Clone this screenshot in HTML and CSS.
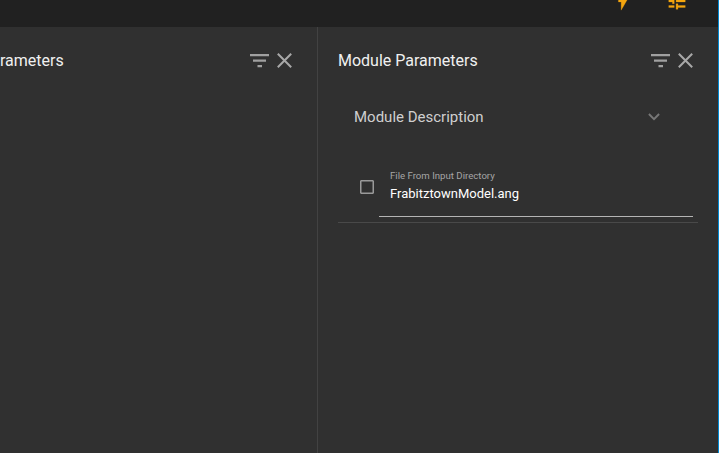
FILE: index.html
```html
<!DOCTYPE html>
<html lang="en">
<head>
<meta charset="utf-8">
<title>Module Parameters</title>
<link rel="stylesheet" href="styles.css">
</head>
<body>
<div class="app">
  <header class="toolbar">
    <svg class="bolt" viewBox="0 0 24 24"><path d="M7 2v11h3v9l7-12h-4l4-8z"/></svg>
    <svg class="tune" viewBox="0 0 24 24"><path d="M3 17v2h6v-2H3zM3 5v2h10V5H3zm10 16v-2h8v-2h-8v-2h-2v6h2zM7 9v2H3v2h4v2h2V9H7zm14 4v-2H11v2h10zm-6-4h2V7h4V5h-4V3h-2v6z"/></svg>
  </header>
  <main class="panels">
    <section class="panel panel-left">
      <div class="panel-head">
        <h2>rameters</h2>
        <svg class="filter" viewBox="0 0 19 14"><path d="M0 0h19v2.2H0zM3 5.5h13v2.2H3zM7.5 11h4.5v2.2H7.5z"/></svg>
        <svg class="close" viewBox="0 0 15 15"><path d="M.8.8l13.4 13.4M14.2.8L.8 14.2"/></svg>
      </div>
    </section>
    <section class="panel panel-right">
      <div class="panel-head">
        <h2>Module Parameters</h2>
        <svg class="filter" viewBox="0 0 19 14"><path d="M0 0h19v2.2H0zM3 5.5h13v2.2H3zM7.5 11h4.5v2.2H7.5z"/></svg>
        <svg class="close" viewBox="0 0 15 15"><path d="M.8.8l13.4 13.4M14.2.8L.8 14.2"/></svg>
      </div>
      <div class="description">
        <span>Module Description</span>
        <svg class="chevron" viewBox="0 0 12 8"><path d="M.9 1L6 6.2 11.1 1"/></svg>
      </div>
      <div class="parameter">
        <span class="checkbox"></span>
        <div class="field">
          <div class="label">File From Input Directory</div>
          <div class="value">FrabitztownModel.ang</div>
        </div>
      </div>
    </section>
  </main>
</div>
</body>
</html>
```
FILE: styles.css
```css
* { box-sizing: border-box; }
body { margin: 0; background: #303030; font-family: Roboto, sans-serif; }
.app {
  display: flex;
  flex-direction: column;
  height: 453px;
  border-right: 1px solid #0288d1;
  overflow: hidden;
}
svg { display: block; flex: none; }
.toolbar {
  display: flex;
  flex: none;
  height: 27px;
  padding-left: 612px;
  background: #212121;
  overflow: hidden;
}
.toolbar svg { fill: #f5a60f; stroke: #f5a60f; stroke-width: .3; }
.bolt { width: 22px; height: 22px; margin-top: -10px; }
.tune { width: 22px; height: 22px; margin: -10px 0 0 32px; }
.panels { display: flex; flex: 1; }
.panel-left { width: 318px; border-right: 1px solid #424242; padding-right: 25px; }
.panel-right { flex: 1; padding: 0 20px 0 20px; }
.panel-head { display: flex; align-items: center; height: 68px; }
.panel-right .panel-head { padding-right: 5px; }
h2 {
  flex: 1;
  margin: 0;
  font-size: 16px;
  line-height: 20px;
  font-weight: 400;
  color: #f0f0f0;
  white-space: nowrap;
}
.filter { width: 19px; height: 14px; margin-right: 8px; fill: #a0a0a0; }
.close { width: 15px; height: 15px; margin-bottom: 1px; fill: none; stroke: #a8a8a8; stroke-width: 2; }
.description {
  display: flex;
  align-items: center;
  justify-content: space-between;
  height: 44px;
  padding: 0 38px 0 16px;
  font-size: 15px;
  color: #cfcfcf;
}
.chevron { width: 12px; height: 8px; fill: none; stroke: #777; stroke-width: 1.9; }
.parameter {
  display: flex;
  height: 84px;
  padding: 30px 5px 5px 22px;
  border-bottom: 1px solid #494949;
}
.checkbox { width: 14px; height: 14px; margin: 11px 5px 0 0; border: 1px solid #999; border-radius: 1px; box-shadow: inset 0 0 0 .5px #999; }
.field { flex: 1; padding-left: 11px; border-bottom: 1px solid #b4b4b4; }
.label { font-size: 9.63px; line-height: 14px; color: #a5a5a5; }
.value { font-size: 13px; line-height: 18px; margin-top: 2px; color: #fff; }
```
